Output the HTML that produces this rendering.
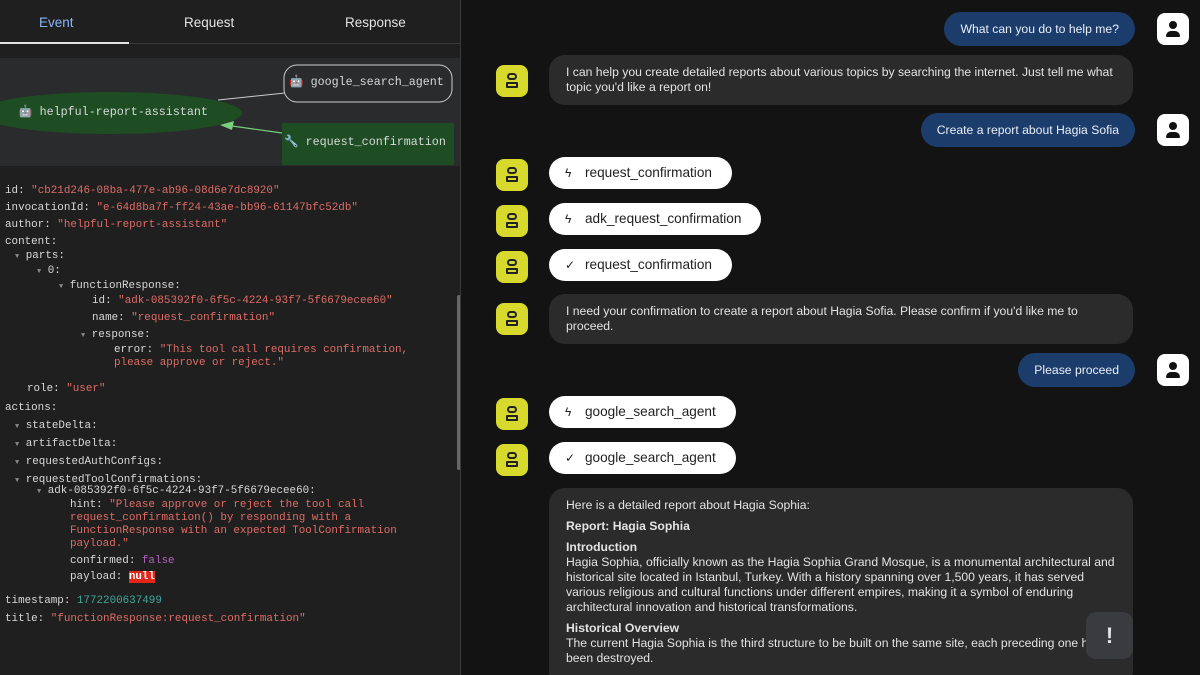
<!DOCTYPE html>
<html><head><meta charset="utf-8"><style>
*{box-sizing:border-box;margin:0;padding:0}
html,body{width:1200px;height:675px;overflow:hidden}
body{background:#131313;font-family:"Liberation Sans",sans-serif;position:relative}
#left{position:absolute;left:0;top:0;width:461px;height:675px;background:#1f1f1f;border-right:1px solid #3a3a3a;overflow:hidden}
.tab{position:absolute;top:15px;font-size:13.5px;color:#e3e3e3}
.mono{font-family:"Liberation Mono",monospace;font-size:10.9px;color:#d8d8d8;position:absolute;white-space:pre;line-height:13px}
.s{color:#e06c66}.p{color:#b45fc0}.n{color:#3fa89a}.nl{background:#e3261a;color:#fff;font-weight:bold}
.tri{color:#888;font-size:7px}
.av{position:absolute;left:496px;width:32px;height:32px;border-radius:8px;background:#d7d92c}
.uav{position:absolute;left:1157px;width:32px;height:32px;border-radius:8px;background:#fff}
.bub{position:absolute;background:#2b2b2b;color:#e3e3e3;font-size:12.2px;border-radius:16px;padding:10px 20px 10px 17px;line-height:15px;overflow:hidden}
.ub{position:absolute;background:#1c3d6b;color:#e8eef8;font-size:12.2px;border-radius:18px;height:34px;line-height:34px;padding:0 16px}
.pill{position:absolute;left:549px;height:32px;background:#fff;border-radius:16px;color:#1f1f1f;font-size:13.6px;line-height:32px;padding:0 20px 0 16px}
.pill i{font-style:normal;display:inline-block;width:20px;font-size:12px}
</style></head><body>
<div id="left">
<div class="tab" style="left:39px;color:#8ab4f8">Event</div>
<div class="tab" style="left:184px">Request</div>
<div class="tab" style="left:345px">Response</div>
<div style="position:absolute;left:0;top:43px;width:461px;height:1px;background:#3a3a3a"></div>
<div style="position:absolute;left:0;top:42px;width:129px;height:2px;background:#e3e3e3"></div>
<div style="position:absolute;left:0;top:58px;width:461px;height:108px;background:#2a2b2d"></div>
<svg style="position:absolute;left:0;top:58px" width="461" height="108">
<ellipse cx="110" cy="55" rx="132" ry="21" fill="#1e4d24"/>
<line x1="218" y1="42" x2="285" y2="35" stroke="#ccc" stroke-width="1"/>
<line x1="282" y1="75" x2="232" y2="68" stroke="#7bd07b" stroke-width="1.2"/>
<polygon points="220,67 234,63 232,72" fill="#7bd07b"/>
<rect x="284" y="7" width="168" height="37" rx="13" fill="none" stroke="#ccc" stroke-width="1"/>
<rect x="282" y="65" width="172" height="42" fill="#1e4d24"/>
</svg>
<div class="mono" style="left:18px;top:106px;font-size:11.7px">🤖 helpful-report-assistant</div>
<div class="mono" style="left:289px;top:76px;font-size:11.7px">🤖 google_search_agent</div>
<div class="mono" style="left:284px;top:136px;font-size:11.7px">🔧 request_confirmation</div>
<div class="mono" style="left:5px;top:183px;line-height:17px">id: <span class="s">"cb21d246-08ba-477e-ab96-08d6e7dc8920"</span>
invocationId: <span class="s">"e-64d8ba7f-ff24-43ae-bb96-61147bfc52db"</span>
author: <span class="s">"helpful-report-assistant"</span>
content:</div>
<div class="mono" style="left:15px;top:250px"><span class="tri">▼</span> parts:</div>
<div class="mono" style="left:37px;top:265px"><span class="tri">▼</span> 0:</div>
<div class="mono" style="left:59px;top:280px"><span class="tri">▼</span> functionResponse:</div>
<div class="mono" style="left:92px;top:295px">id: <span class="s">"adk-085392f0-6f5c-4224-93f7-5f6679ecee60"</span></div>
<div class="mono" style="left:92px;top:312px">name: <span class="s">"request_confirmation"</span></div>
<div class="mono" style="left:81px;top:329px"><span class="tri">▼</span> response:</div>
<div class="mono" style="left:114px;top:344px">error: <span class="s">"This tool call requires confirmation,
please approve or reject."</span></div>
<div class="mono" style="left:27px;top:383px">role: <span class="s">"user"</span></div>
<div class="mono" style="left:5px;top:402px">actions:</div>
<div class="mono" style="left:15px;top:418px;line-height:17px"><span class="tri">▼</span> stateDelta:
<span class="tri">▼</span> artifactDelta:
<span class="tri">▼</span> requestedAuthConfigs:
<span class="tri">▼</span> requestedToolConfirmations:</div>
<div class="mono" style="left:37px;top:485px"><span class="tri">▼</span> adk-085392f0-6f5c-4224-93f7-5f6679ecee60:</div>
<div class="mono" style="left:70px;top:499px">hint: <span class="s">"Please approve or reject the tool call
request_confirmation() by responding with a
FunctionResponse with an expected ToolConfirmation
payload."</span></div>
<div class="mono" style="left:70px;top:555px">confirmed: <span class="p">false</span></div>
<div class="mono" style="left:70px;top:571px">payload: <span class="nl">null</span></div>
<div class="mono" style="left:5px;top:595px">timestamp: <span class="n">1772200637499</span></div>
<div class="mono" style="left:5px;top:613px">title: <span class="s">"functionResponse:request_confirmation"</span></div>
<div style="position:absolute;left:457px;top:295px;width:4px;height:175px;background:#666;border-radius:2px"></div>
</div>

<div class="ub" style="right:65px;top:12px">What can you do to help me?</div><div class="uav" style="top:13px"></div>
<div class="av" style="top:65px"></div>
<div class="bub" style="left:549px;top:55px;width:584px">I can help you create detailed reports about various topics by searching the internet. Just tell me what topic you'd like a report on!</div>
<div class="ub" style="right:65px;top:113px">Create a report about Hagia Sofia</div><div class="uav" style="top:114px"></div>
<div class="av" style="top:159px"></div><div class="pill" style="top:157px"><i>ϟ</i>request_confirmation</div>
<div class="av" style="top:205px"></div><div class="pill" style="top:203px"><i>ϟ</i>adk_request_confirmation</div>
<div class="av" style="top:251px"></div><div class="pill" style="top:249px"><i>✓</i>request_confirmation</div>
<div class="av" style="top:303px"></div>
<div class="bub" style="left:549px;top:294px;width:584px;padding-right:40px">I need your confirmation to create a report about Hagia Sofia. Please confirm if you'd like me to proceed.</div>
<div class="ub" style="right:65px;top:353px">Please proceed</div><div class="uav" style="top:354px"></div>
<div class="av" style="top:398px"></div><div class="pill" style="top:396px"><i>ϟ</i>google_search_agent</div>
<div class="av" style="top:444px"></div><div class="pill" style="top:442px"><i>✓</i>google_search_agent</div>
<div class="bub" style="left:549px;top:488px;width:584px;height:200px;padding-top:10px;padding-right:10px">Here is a detailed report about Hagia Sophia:<br><b style="display:block;margin-top:6px">Report: Hagia Sophia</b><b style="display:block;margin-top:6px">Introduction</b>Hagia Sophia, officially known as the Hagia Sophia Grand Mosque, is a monumental architectural and historical site located in Istanbul, Turkey. With a history spanning over 1,500 years, it has served various religious and cultural functions under different empires, making it a symbol of enduring architectural innovation and historical transformations.<b style="display:block;margin-top:6px">Historical Overview</b>The current Hagia Sophia is the third structure to be built on the same site, each preceding one had been destroyed.</div>
<div style="position:absolute;left:1086px;top:612px;width:47px;height:47px;border-radius:10px;background:#3a3b3e;color:#e3e3e3;font-size:22px;font-weight:bold;text-align:center;line-height:47px">!</div>
<style>.av::before{content:"";position:absolute;left:11px;top:8px;width:10px;height:7px;border:2px solid #222;border-radius:4px;box-sizing:border-box}.av::after{content:"";position:absolute;left:10px;top:17px;width:12px;height:6px;border:2px solid #222;border-radius:1px;box-sizing:border-box}
.uav::before{content:"";position:absolute;left:12px;top:8px;width:8px;height:8px;border-radius:50%;background:#111}.uav::after{content:"";position:absolute;left:9px;top:18px;width:14px;height:6px;border-radius:5px 5px 1px 1px;background:#111}</style>
</body></html>
